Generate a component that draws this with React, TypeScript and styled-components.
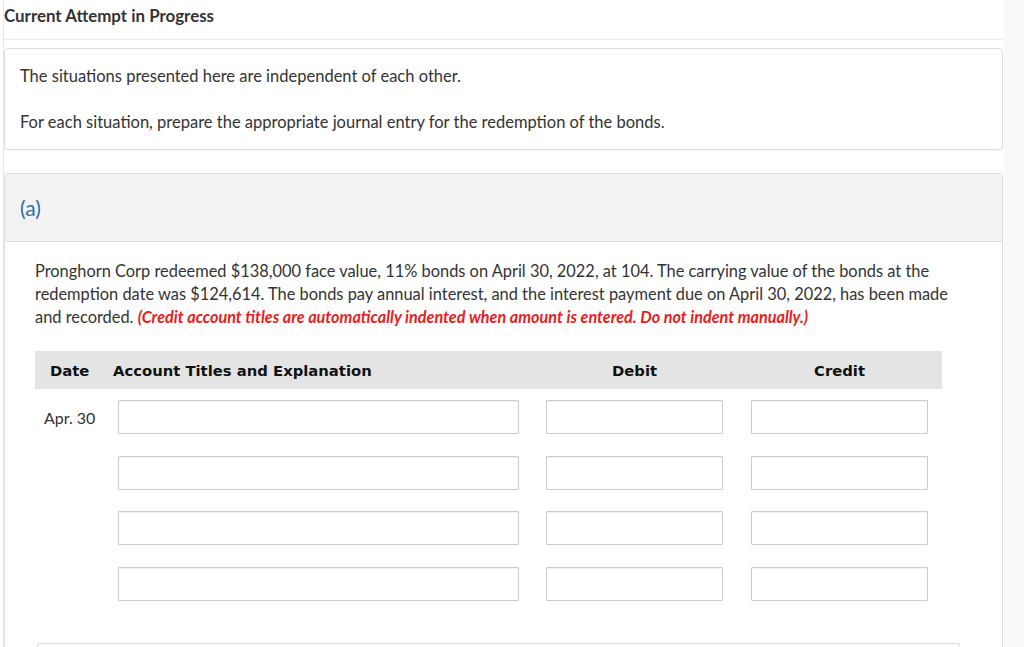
import styled, { createGlobalStyle } from "styled-components";

const GlobalStyle = createGlobalStyle`
  html, body {
    margin: 0;
    padding: 0;
    background: #ffffff;
  }
  body {
    font-family: "Lato", "Open Sans", sans-serif;
    color: #333333;
  }
`;

const Page = styled.div`
  display: flex;
  min-height: 647px;
  padding-left: 3px;
  background: #ffffff;
`;

const Main = styled.div`
  width: 1001px;
  flex-shrink: 0;
  border-left: 1px solid #e6e6e6;
  box-sizing: border-box;
  padding-right: 1px;
`;

const Side = styled.div`
  flex: 1;
  background: #f9f9f9;
`;

const Header = styled.div`
  height: 40px;
  box-sizing: border-box;
  border-bottom: 1px solid #ececec;
  padding-top: 6px;
  font-size: 16.9px;
  line-height: 20px;
  font-weight: 700;
  color: #333333;
`;

const Intro = styled.div`
  margin-top: 8px;
  border: 1px solid #dddddd;
  border-radius: 4px;
  padding: 16px 15px 16px;
  box-shadow: 0 1px 1px rgba(0, 0, 0, 0.04);
`;

const Para = styled.p<{ $gap?: number }>`
  margin: ${(p) => p.$gap ?? 0}px 0 0;
  font-size: 16.5px;
  line-height: 22px;
`;

const Section = styled.div`
  margin-top: 23px;
  border: 1px solid #dddddd;
  border-bottom: none;
  border-radius: 4px 4px 0 0;
`;

const SectionHead = styled.div`
  height: 67px;
  display: flex;
  align-items: center;
  padding-left: 15px;
  background: #f3f3f3;
  border-bottom: 1px solid #dddddd;
  font-size: 21px;
  color: #2e6da4;
`;

const SectionBody = styled.div`
  padding: 17px 40px 0 30px;
`;

const Problem = styled.p`
  margin: 0;
  font-size: 16.4px;
  line-height: 23px;
`;

const Note = styled.span`
  color: #e8201d;
  font-style: italic;
  font-weight: 700;
  font-size: 16.2px;
`;

const Table = styled.div`
  margin-top: 23px;
  width: 907px;
`;

const Grid = styled.div`
  display: grid;
  grid-template-columns: 78px 419px 205px 205px;
  align-items: center;
`;

const HeadRow = styled(Grid)`
  height: 38px;
  background: #e4e4e4;
  font-family: "DejaVu Sans", "Verdana", sans-serif;
  font-weight: 700;
  font-size: 14.8px;
  color: #111111;
`;

const HeadCell = styled.div<{ $align?: string; $pad?: number }>`
  text-align: ${(p) => p.$align ?? "left"};
  padding-left: ${(p) => p.$pad ?? 0}px;
`;

const Row = styled(Grid)`
  padding: 11px 0 10.5px;
`;

const DateCell = styled.div`
  padding-left: 9px;
  font-size: 16px;
  color: #333333;
`;

const Cell = styled.div<{ $center?: boolean }>`
  display: flex;
  justify-content: ${(p) => (p.$center ? "center" : "flex-start")};
  padding-left: ${(p) => (p.$center ? 0 : 5)}px;
`;

const Field = styled.input<{ $w: number }>`
  width: ${(p) => p.$w}px;
  height: 34px;
  box-sizing: border-box;
  border: 1px solid #cccccc;
  border-radius: 1px;
  box-shadow: inset 0 1px 1px rgba(0, 0, 0, 0.06);
  background: #ffffff;
  outline: none;
  padding: 0 6px;
  font-family: "Lato", sans-serif;
  font-size: 15px;
`;

const NextBox = styled.div`
  margin: 32px 2px 0 2px;
  height: 20px;
  border: 1px solid #dddddd;
  border-bottom: none;
  border-radius: 3px 3px 0 0;
  background: #fbfbfb;
`;

const rows = ["Apr. 30", "", "", ""];

export default function App() {
  return (
    <>
      <GlobalStyle />
      <Page>
        <Main>
          <Header>Current Attempt in Progress</Header>
          <Intro>
            <Para>The situations presented here are independent of each other.</Para>
            <Para $gap={24}>
              For each situation, prepare the appropriate journal entry for the redemption of the bonds.
            </Para>
          </Intro>
          <Section>
            <SectionHead>(a)</SectionHead>
            <SectionBody>
              <Problem>
                Pronghorn Corp redeemed $138,000 face value, 11% bonds on April 30, 2022, at 104. The
                carrying value of the bonds at the redemption date was $124,614. The bonds pay annual
                interest, and the interest payment due on April 30, 2022, has been made and recorded.{" "}
                <Note>
                  (Credit account titles are automatically indented when amount is entered. Do not
                  indent manually.)
                </Note>
              </Problem>
              <Table>
                <HeadRow>
                  <HeadCell $pad={15}>Date</HeadCell>
                  <HeadCell>Account Titles and Explanation</HeadCell>
                  <HeadCell $align="center">Debit</HeadCell>
                  <HeadCell $align="center">Credit</HeadCell>
                </HeadRow>
                {rows.map((d, i) => (
                  <Row key={i}>
                    <DateCell>{d}</DateCell>
                    <Cell>
                      <Field $w={401} />
                    </Cell>
                    <Cell $center>
                      <Field $w={177} />
                    </Cell>
                    <Cell $center>
                      <Field $w={177} />
                    </Cell>
                  </Row>
                ))}
              </Table>
              <NextBox />
            </SectionBody>
          </Section>
        </Main>
        <Side />
      </Page>
    </>
  );
}
